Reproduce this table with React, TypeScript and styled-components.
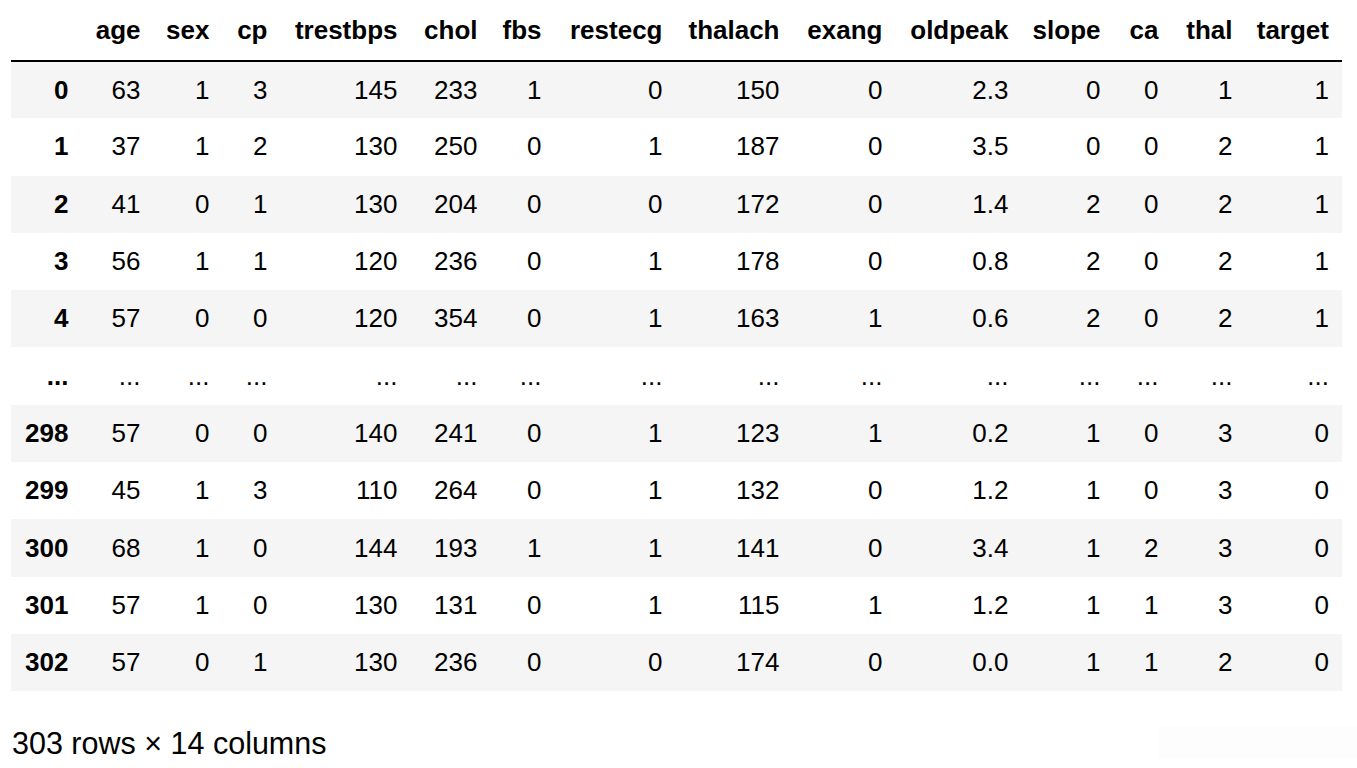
import * as React from 'react'
import styled, { createGlobalStyle } from 'styled-components'

const GlobalStyle = createGlobalStyle`
  html, body {
    margin: 0;
    padding: 0;
    background: #ffffff;
  }
  body {
    font-family: 'Liberation Sans', Arial, sans-serif;
    color: #000000;
  }
`

const COLUMNS = [
  'age',
  'sex',
  'cp',
  'trestbps',
  'chol',
  'fbs',
  'restecg',
  'thalach',
  'exang',
  'oldpeak',
  'slope',
  'ca',
  'thal',
  'target',
]

// measured column widths, index first
const WIDTHS = [70.5, 72, 69, 58, 130, 80, 64, 121, 117, 103, 126, 92, 58, 74, 96.5]

const ROWS: Array<[string, string[]]> = [
  ['0', ['63', '1', '3', '145', '233', '1', '0', '150', '0', '2.3', '0', '0', '1', '1']],
  ['1', ['37', '1', '2', '130', '250', '0', '1', '187', '0', '3.5', '0', '0', '2', '1']],
  ['2', ['41', '0', '1', '130', '204', '0', '0', '172', '0', '1.4', '2', '0', '2', '1']],
  ['3', ['56', '1', '1', '120', '236', '0', '1', '178', '0', '0.8', '2', '0', '2', '1']],
  ['4', ['57', '0', '0', '120', '354', '0', '1', '163', '1', '0.6', '2', '0', '2', '1']],
  ['...', COLUMNS.map(() => '...')],
  ['298', ['57', '0', '0', '140', '241', '0', '1', '123', '1', '0.2', '1', '0', '3', '0']],
  ['299', ['45', '1', '3', '110', '264', '0', '1', '132', '0', '1.2', '1', '0', '3', '0']],
  ['300', ['68', '1', '0', '144', '193', '1', '1', '141', '0', '3.4', '1', '2', '3', '0']],
  ['301', ['57', '1', '0', '130', '131', '0', '1', '115', '1', '1.2', '1', '1', '3', '0']],
  ['302', ['57', '0', '1', '130', '236', '0', '0', '174', '0', '0.0', '1', '1', '2', '0']],
]

export default function App(): JSX.Element {
  return (
    <Output>
      <GlobalStyle />
      <DataFrame>
        <colgroup>
          {WIDTHS.map((w, i) => (
            <Col key={i} $w={w} />
          ))}
        </colgroup>
        <thead>
          <HeadRow>
            <HeadCell />
            {COLUMNS.map((c) => (
              <HeadCell key={c}>{c}</HeadCell>
            ))}
          </HeadRow>
        </thead>
        <tbody>
          {ROWS.map(([idx, values]) => (
            <BodyRow key={idx}>
              <IndexCell>{idx}</IndexCell>
              {values.map((v, i) => (
                <Cell key={i}>{v}</Cell>
              ))}
            </BodyRow>
          ))}
        </tbody>
      </DataFrame>
      <Footer>
        <Shape>303 rows × 14 columns</Shape>
        <FaintBox />
      </Footer>
    </Output>
  )
}

const Output = styled.div`
  padding-left: 11px;
  width: 1346px;
`

const DataFrame = styled.table`
  border-collapse: collapse;
  border-spacing: 0;
  table-layout: fixed;
  width: 1331px;
  font-size: 26px;
  color: #000000;
`

const Col = styled.col<{ $w: number }>`
  width: ${(p) => p.$w}px;
`

const HeadRow = styled.tr`
  height: 61px;
  border-bottom: 2px solid #000000;
`

const HeadCell = styled.th`
  padding: 0 13px 0 0;
  text-align: right;
  vertical-align: middle;
  font-weight: bold;
  white-space: nowrap;
`

const BodyRow = styled.tr`
  height: 57.3px;
  &:nth-child(odd) {
    background: #f5f5f5;
  }
`

const Cell = styled.td`
  padding: 0 13px 0 0;
  text-align: right;
  vertical-align: middle;
  white-space: nowrap;
`

const IndexCell = styled(Cell).attrs({ as: 'th' })`
  font-weight: bold;
`

const Footer = styled.div`
  display: flex;
  align-items: center;
  justify-content: space-between;
  margin-top: 35px;
  height: 34px;
`

const Shape = styled.p`
  margin: 0 0 0 1px;
  font-size: 30.5px;
  line-height: 34px;
`

const FaintBox = styled.div`
  width: 199px;
  height: 32px;
  margin-top: -2px;
  background: #fdfdfd;
`
